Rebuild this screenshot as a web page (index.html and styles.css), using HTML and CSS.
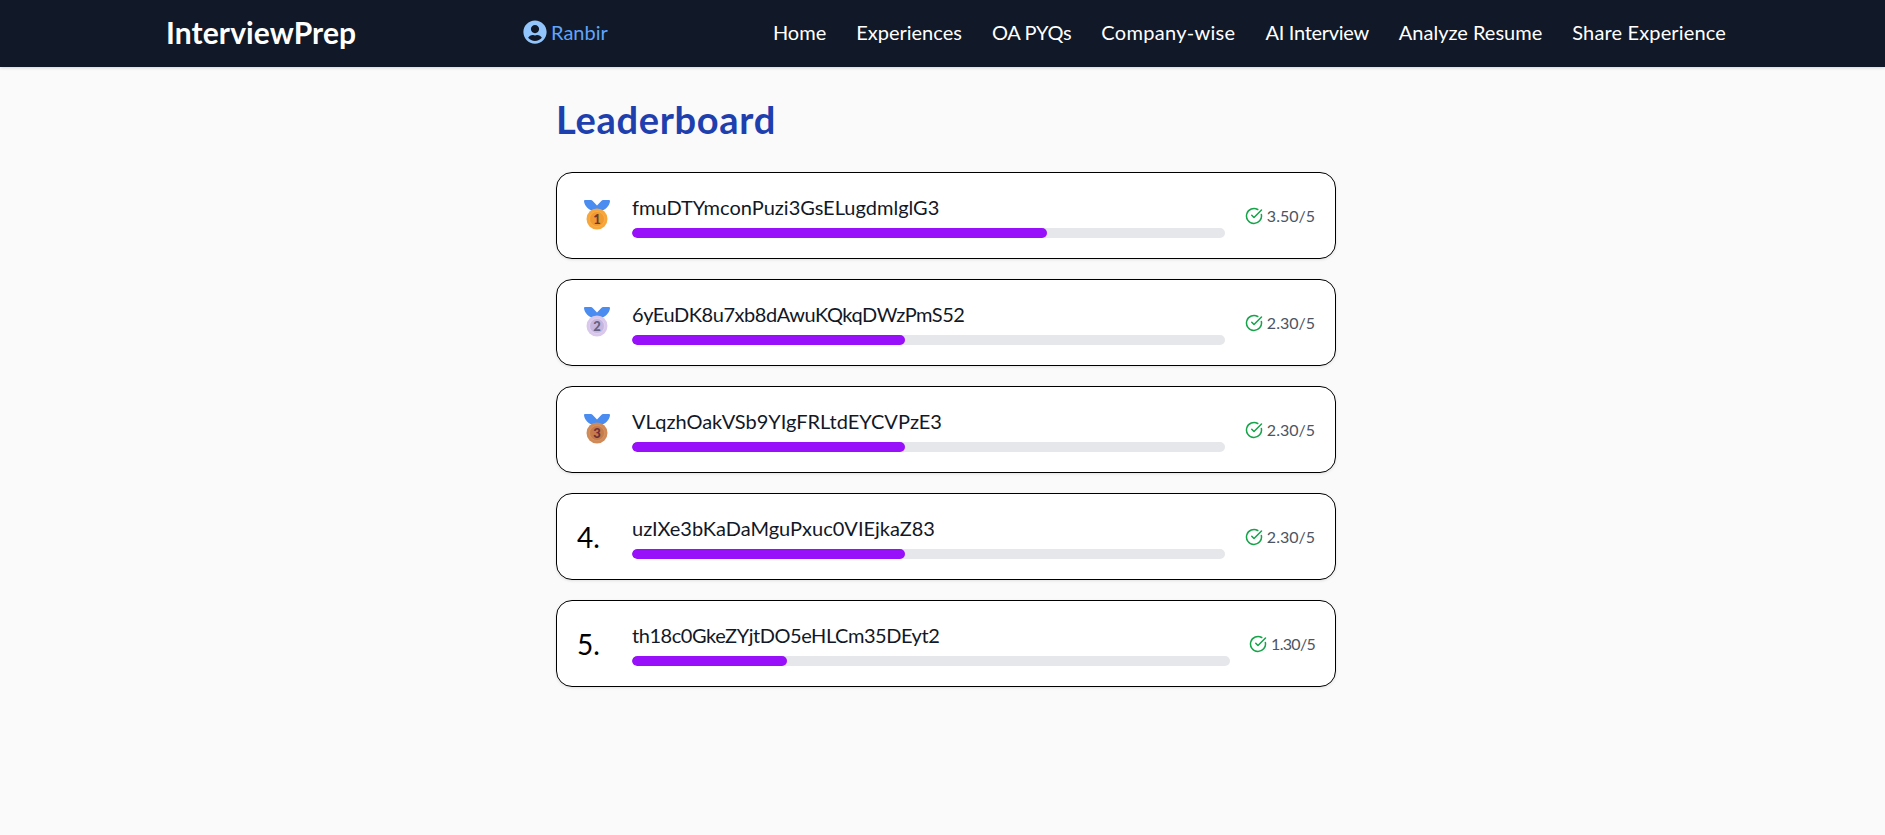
FILE: index.html
```html
<!DOCTYPE html>
<html lang="en">
<head>
<meta charset="utf-8">
<title>Leaderboard</title>
<link rel="stylesheet" href="styles.css">
</head>
<body>
<svg class="defs" width="0" height="0" aria-hidden="true">
  <defs>
    <symbol id="ribbon" viewBox="0 0 26 11">
      <path d="M0 1.2C0 .5.5 0 1.2 0h5.6c.8 0 1.4.3 1.9 1L13 5.6 17.300 1c.5-.7 1.100-1 1.900-1h5.600C25.500 0 26 .5 26 1.200 25.500 6 21 10.500 16 11h-6C5 10.500.5 6 0 1.200Z" fill="#4b8cf0"/>
    </symbol>
    <symbol id="check" viewBox="0 0 24 24">
      <path d="M21.801 10A10 10 0 1 1 17 3.335" fill="none" stroke="currentColor" stroke-width="2" stroke-linecap="round" stroke-linejoin="round"/>
      <path d="m9 11 3 3L22 4" fill="none" stroke="currentColor" stroke-width="2" stroke-linecap="round" stroke-linejoin="round"/>
    </symbol>
  </defs>
</svg>
<header class="navbar">
  <a class="logo">InterviewPrep</a>
  <a class="user">
    <svg class="user-icon" viewBox="0 0 496 512"><path fill="currentColor" d="M248 8C111 8 0 119 0 256s111 248 248 248 248-111 248-248S385 8 248 8zm0 96c48.600 0 88 39.400 88 88s-39.400 88-88 88-88-39.400-88-88 39.400-88 88-88zm0 344c-58.700 0-111.300-26.600-146.500-68.200 18.800-35.400 55.600-59.800 98.500-59.800 2.400 0 4.800.4 7.100 1.100 13 4.200 26.600 6.900 40.900 6.900 14.300 0 28-2.700 40.900-6.900 2.300-.7 4.700-1.100 7.100-1.100 42.900 0 79.700 24.400 98.500 59.800C359.300 421.400 306.700 448 248 448z"/></svg>
    <span>Ranbir</span>
  </a>
  <nav class="links">
    <a>Home</a>
    <a>Experiences</a>
    <a class="link-tight">OA PYQs</a>
    <a class="link-wide">Company-wise</a>
    <a class="link-tight">AI Interview</a>
    <a>Analyze Resume</a>
    <a class="link-loose">Share Experience</a>
  </nav>
</header>
<main class="board">
  <h1 class="title">Leaderboard</h1>
  <ol class="list">
    <li class="card">
      <div class="rank">
        <svg class="medal" viewBox="0 0 26 30"><use href="#ribbon" width="26" height="11"/><circle class="disc-gold" cx="13" cy="19" r="10.500"/><circle class="ring-gold" cx="13" cy="19" r="7.500"/><text class="medal-num num-gold" x="13" y="23.500">1</text></svg>
      </div>
      <div class="info">
        <div class="name">fmuDTYmconPuzi3GsELugdmlglG3</div>
        <div class="track"><div class="fill" style="width:70%"></div></div>
      </div>
      <div class="score"><svg class="check"><use href="#check"/></svg><span>3.50/5</span></div>
    </li>
    <li class="card">
      <div class="rank">
        <svg class="medal" viewBox="0 0 26 30"><use href="#ribbon" width="26" height="11"/><circle class="disc-silver" cx="13" cy="19" r="10.500"/><circle class="ring-silver" cx="13" cy="19" r="7.500"/><text class="medal-num num-silver" x="13" y="23.500">2</text></svg>
      </div>
      <div class="info">
        <div class="name name-tight">6yEuDK8u7xb8dAwuKQkqDWzPmS52</div>
        <div class="track"><div class="fill" style="width:46%"></div></div>
      </div>
      <div class="score"><svg class="check"><use href="#check"/></svg><span>2.30/5</span></div>
    </li>
    <li class="card">
      <div class="rank">
        <svg class="medal" viewBox="0 0 26 30"><use href="#ribbon" width="26" height="11"/><circle class="disc-bronze" cx="13" cy="19" r="10.500"/><circle class="ring-bronze" cx="13" cy="19" r="7.500"/><text class="medal-num num-bronze" x="13" y="23.500">3</text></svg>
      </div>
      <div class="info">
        <div class="name">VLqzhOakVSb9YIgFRLtdEYCVPzE3</div>
        <div class="track"><div class="fill" style="width:46%"></div></div>
      </div>
      <div class="score"><svg class="check"><use href="#check"/></svg><span>2.30/5</span></div>
    </li>
    <li class="card">
      <div class="rank rank-num">4.</div>
      <div class="info">
        <div class="name">uzIXe3bKaDaMguPxuc0VIEjkaZ83</div>
        <div class="track"><div class="fill" style="width:46%"></div></div>
      </div>
      <div class="score"><svg class="check"><use href="#check"/></svg><span>2.30/5</span></div>
    </li>
    <li class="card">
      <div class="rank rank-num">5.</div>
      <div class="info">
        <div class="name name-tight">th18c0GkeZYjtDO5eHLCm35DEyt2</div>
        <div class="track"><div class="fill" style="width:26%"></div></div>
      </div>
      <div class="score score-narrow"><svg class="check"><use href="#check"/></svg><span>1.30/5</span></div>
    </li>
  </ol>
</main>
</body>
</html>
```
FILE: styles.css
```css
* { box-sizing: border-box; }
html, body { margin: 0; padding: 0; }
body {
  background: #fafafa;
  font-family: "Lato", "Inter", sans-serif;
  color: #111827;
  min-height: 835px;
  overflow: hidden;
}
.defs { position: absolute; }
.navbar {
  height: 67px;
  background: #111827;
  display: flex;
  align-items: center;
  padding: 0 159px 4px 166px;
  box-shadow: 0 1px 3px rgba(0,0,0,.15);
}
.logo {
  width: 357px;
  color: #fff;
  font-size: 30px;
  font-weight: 700;
  letter-spacing: .1px;
  flex: none;
}
.user {
  display: flex;
  align-items: center;
  gap: 4px;
  color: #60a5fa;
  font-size: 20px;
  flex: 1;
}
.user-icon { width: 24px; height: 24px; color: #93c5fd; }
.links { display: flex; gap: 30px; color: #fff; font-size: 20px; }
.link-wide { letter-spacing: .3px; }
.link-loose { letter-spacing: .15px; }
.link-tight { letter-spacing: -.3px; }
.board { width: 780px; margin: 0 549px 0 556px; padding-top: 32px; }
.title {
  margin: 0 0 33px;
  font-size: 38px;
  line-height: 40px;
  font-weight: 700;
  letter-spacing: .7px;
  color: #1e40af;
}
.list { list-style: none; margin: 0; padding: 0; display: flex; flex-direction: column; gap: 20px; }
.card {
  height: 87px;
  display: flex;
  align-items: center;
  background: #fff;
  border: 1px solid #000;
  border-radius: 16px;
  padding: 0 20px;
  box-shadow: 0 1px 3px rgba(0,0,0,.1);
}
.rank { width: 55px; flex: none; display: flex; align-items: center; }
.rank-num { font-size: 28px; color: #000; }
.medal { width: 26px; height: 30px; margin: -2px 0 0 7px; }
.disc-gold { fill: #f7a63c; }
.ring-gold { fill: #ef9a30; stroke: #fbb550; stroke-width: .6; }
.num-gold { fill: #6d3b35; }
.disc-silver { fill: #d9c8ec; }
.ring-silver { fill: #c6b6df; stroke: #e6daf3; stroke-width: .6; }
.num-silver { fill: #655f80; }
.disc-bronze { fill: #d08a58; }
.ring-bronze { fill: #c57c4a; stroke: #dc9a6c; stroke-width: .6; }
.num-bronze { fill: #6b2f3a; }
.medal-num { font-family: "Lato", sans-serif; font-size: 13px; font-weight: 900; text-anchor: middle; }
.info { flex: 1; min-width: 0; padding-top: 2px; }
.name { font-size: 20px; line-height: 28px; color: #111827; transform: translateY(-3px); }
.name-tight { letter-spacing: -.45px; }
.track { height: 10px; margin-top: 4px; background: #e5e7eb; border-radius: 999px; overflow: hidden; }
.fill { height: 100%; background: #9810fa; border-radius: 999px; }
.score { display: flex; align-items: center; gap: 4px; margin-left: 20px; font-size: 16px; color: #4b5563; flex: none; width: 70px; justify-content: flex-end; }
.score-narrow { width: 65px; }
.score-narrow span { letter-spacing: -.7px; }
.check { width: 18px; height: 18px; color: #16a34a; flex: none; }
```
